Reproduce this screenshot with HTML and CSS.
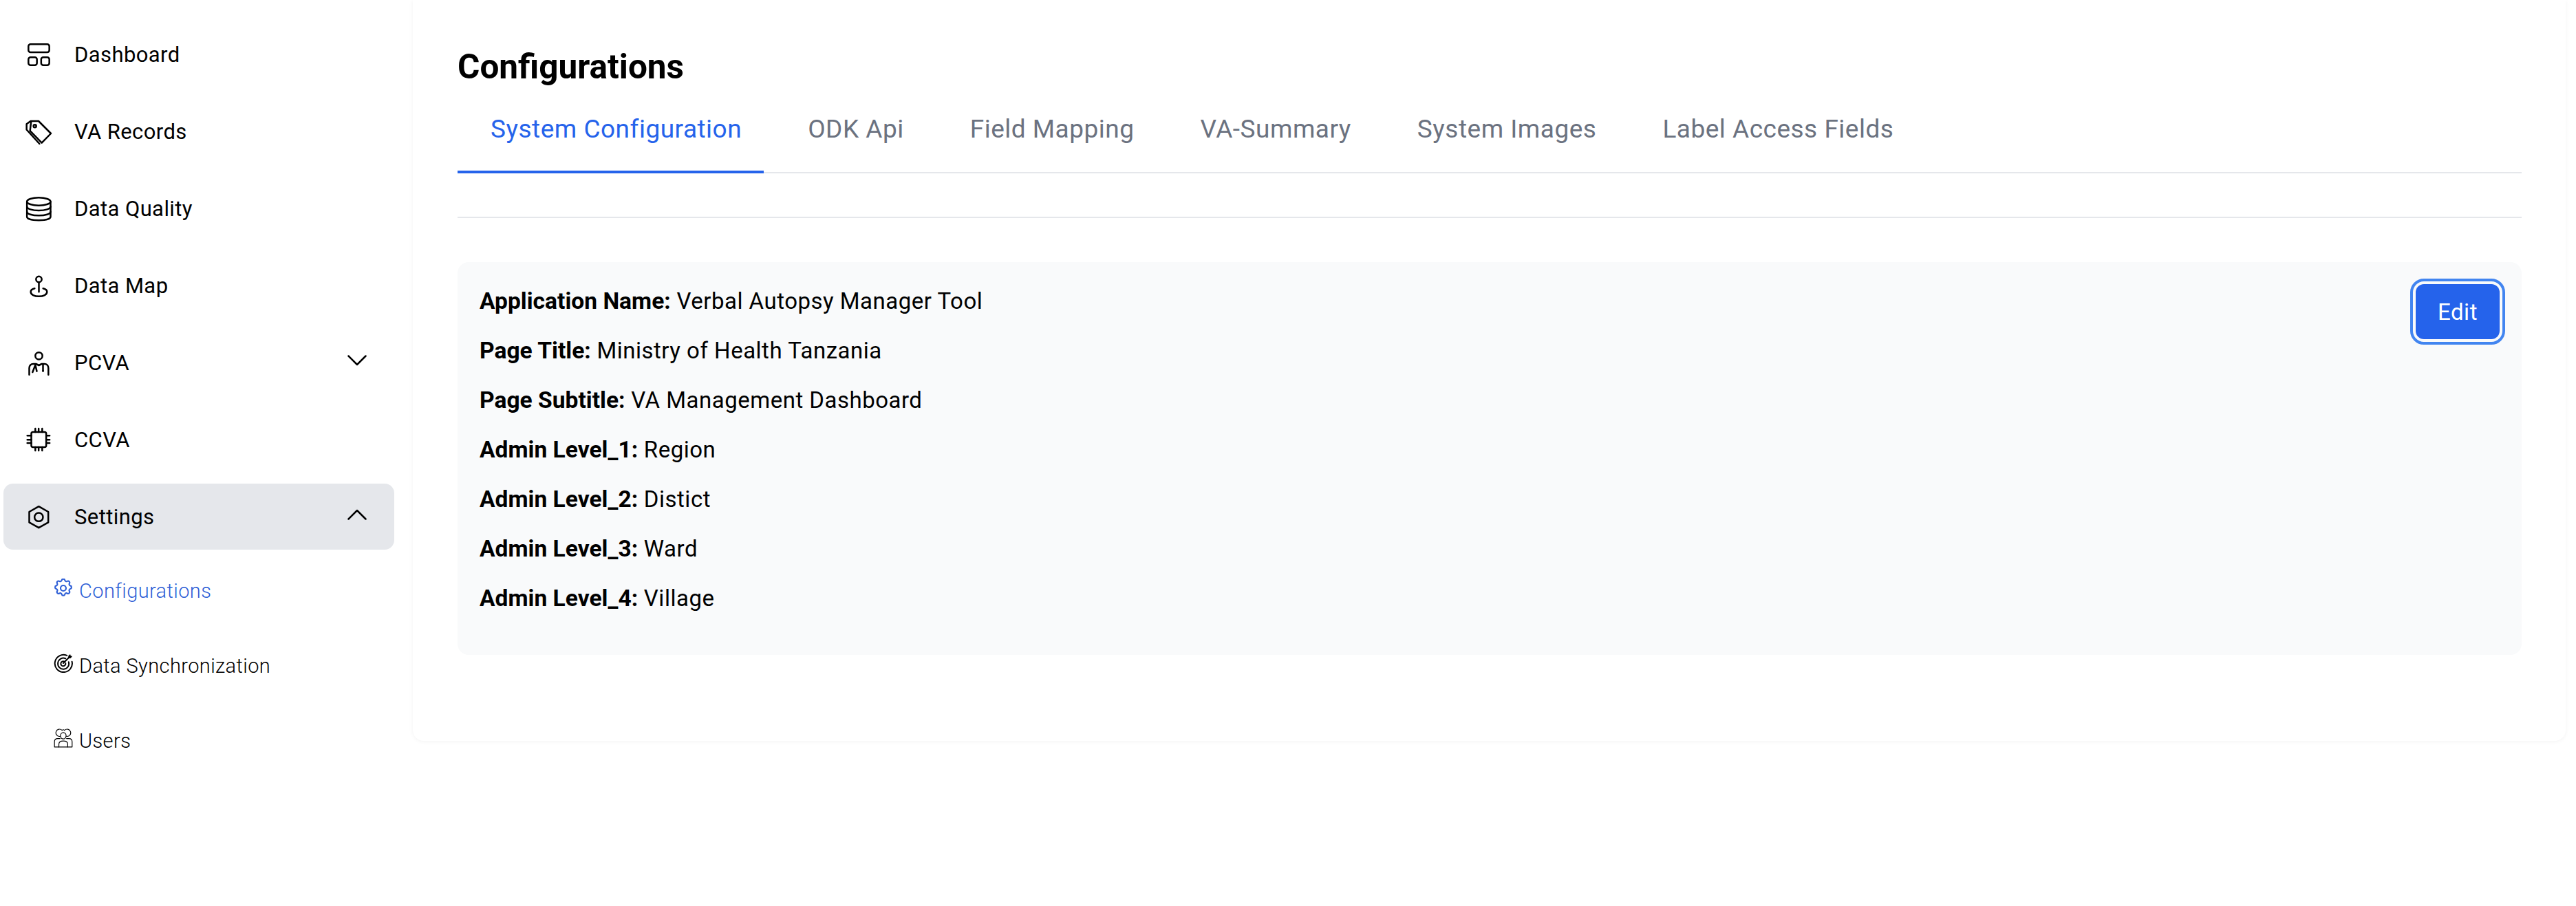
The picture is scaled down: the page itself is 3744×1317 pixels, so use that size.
FILE: index.html
```html
<!DOCTYPE html>
<html lang="en">
<head>
  <meta charset="UTF-8">
  <title>Configurations</title>
  <link rel="stylesheet" href="styles.css">
</head>
<body>

  <aside class="sidebar">
    <nav class="nav">
      <a class="nav-item">
        <svg class="nav-icon" viewBox="0 0 24 24"><rect x="2.600" y="3.200" width="18.200" height="7" rx="1.800"/><rect x="2.600" y="14.600" width="7.400" height="6.800" rx="1.800"/><rect x="13.700" y="14.600" width="7.100" height="6.800" rx="1.800"/></svg>
        <span>Dashboard</span>
      </a>
      <a class="nav-item">
        <svg class="nav-icon" viewBox="0 0 24 24"><path d="M5 3h6.400l10.800 10.800-8 8.200L4 11.500z"/><circle cx="8.200" cy="7.400" r="1.200"/><path d="M4.500 3L1 5.500v5l11.200 12.300"/></svg>
        <span>VA Records</span>
      </a>
      <a class="nav-item">
        <svg class="nav-icon" viewBox="0 0 24 24"><ellipse cx="11.600" cy="6" rx="10.300" ry="3.400"/><path d="M1.300 6v13.200c0 2 4.600 3.100 10.300 3.100s10.300-1.100 10.300-3.100V6"/><path d="M1.300 10.400c0 2 4.600 3.400 10.300 3.400s10.300-1.400 10.300-3.400"/><path d="M1.300 14.800c0 2 4.600 3.400 10.300 3.400s10.300-1.400 10.300-3.400"/></svg>
        <span>Data Quality</span>
      </a>
      <a class="nav-item">
        <svg class="nav-icon" viewBox="0 0 24 24"><circle cx="11.700" cy="6.600" r="2.500"/><path d="M11.700 9.100v8.400"/><path d="M8 14.500c-2.200.5-3.400 1.500-3.400 3 0 2.500 3.200 4 7.100 4s7.100-1.500 7.100-4c0-1.500-1.200-2.500-3.400-3"/></svg>
        <span>Data Map</span>
      </a>
      <a class="nav-item">
        <svg class="nav-icon" viewBox="0 0 24 24"><circle cx="11.700" cy="6.200" r="3.100"/><path d="M3.300 22.600v-5.800c0-2.200 1.500-3.600 3.500-3.600h2.400l2.500 1.200 2.500-1.200h2.300c2 0 3.500 1.400 3.500 3.600v5.800"/><path d="M6.200 20.400l2.400-6.200 1.300 5.400"/><path d="M15.300 13.800v5.200"/><circle class="filled" cx="15.300" cy="19.400" r="0.900"/></svg>
        <span>PCVA</span>
        <svg class="chevron" viewBox="0 0 28 16"><path d="M1.500 1.500L14 14 26.500 1.500"/></svg>
      </a>
      <a class="nav-item">
        <svg class="nav-icon" viewBox="0 0 24 24"><rect x="5.100" y="5.400" width="13" height="13.200" rx="1.500"/><path d="M8.600 5.400V2.400M11.500 5.400V2.400M14.600 5.400V2.400M8.600 21.600v-3M11.500 21.600v-3M14.600 21.600v-3M1.600 8.600h3.500M1.600 12.200h3.500M1.600 15h3.500M18.100 8.600h3M18.100 12.200h3M18.100 15h3"/></svg>
        <span>CCVA</span>
      </a>
      <a class="nav-item is-open">
        <svg class="nav-icon" viewBox="0 0 24 24"><path d="M11.600 3.100l8.300 4.700v9.200l-8.300 4.700-8.300-4.700V7.800z"/><circle cx="11.600" cy="12.400" r="3.700"/></svg>
        <span>Settings</span>
        <svg class="chevron" viewBox="0 0 28 16"><path d="M1.500 14.500L14 2 26.500 14.500"/></svg>
      </a>
    </nav>

    <div class="subnav">
      <a class="subnav-item is-active">
        <svg class="sub-icon" viewBox="1.500 1.500 21 21"><path d="M10.300 3.300c.4-1.700 3-1.700 3.400 0a1.700 1.700 0 0 0 2.600 1.100c1.500-.9 3.300.8 2.400 2.400a1.700 1.700 0 0 0 1 2.500c1.700.4 1.700 3 0 3.400a1.700 1.700 0 0 0-1 2.600c.9 1.500-.9 3.300-2.400 2.400a1.700 1.700 0 0 0-2.600 1c-.4 1.700-3 1.700-3.400 0a1.700 1.700 0 0 0-2.600-1c-1.500.9-3.300-.9-2.400-2.400a1.700 1.700 0 0 0-1-2.600c-1.700-.4-1.700-3 0-3.400a1.700 1.700 0 0 0 1-2.500c-.9-1.600.9-3.300 2.400-2.400a1.700 1.700 0 0 0 2.600-1.100z"/><circle cx="12" cy="12" r="3"/></svg>
        <span>Configurations</span>
      </a>
      <a class="subnav-item">
        <svg class="sub-icon target" viewBox="0 0 24 24"><path d="M16.500 2.500A10.800 10.800 0 1 0 22.800 10"/><path d="M14.800 6.200A6.900 6.900 0 1 0 18.700 10.500"/><path d="M13.200 10A3 3 0 1 0 14.800 12"/><path d="M12 12l6.800-6.800"/><path class="filled" d="M18 6l.3-3.300L20.600.8l.6 2 2 .6-2 2.300z"/></svg>
        <span>Data Synchronization</span>
      </a>
      <a class="subnav-item">
        <svg class="sub-icon thin" viewBox="0 0 24 24"><path d="M8 9.800a4.500 4.500 0 1 1 2.500-7.600 2.200 2.200 0 0 1 3 0 4.500 4.500 0 1 1 2.500 7.600"/><path d="M8.500 9a3.500 4 0 1 0 7 0 3.500 4 0 1 0-7 0z"/><path d="M6.500 23v-3.500c0-2.500 2-4 5.500-4s5.500 1.500 5.500 4V23"/><path d="M8 12.500H5c-2.500 0-4 1.500-4 4V23h22v-6.500c0-2.500-1.500-4-4-4h-3"/></svg>
        <span>Users</span>
      </a>
    </div>
  </aside>

  <main class="content">
    <h1 class="title">Configurations</h1>

    <div class="tabs">
      <a class="tab is-active">System Configuration</a>
      <a class="tab">ODK Api</a>
      <a class="tab">Field Mapping</a>
      <a class="tab">VA-Summary</a>
      <a class="tab">System Images</a>
      <a class="tab">Label Access Fields</a>
    </div>

    <hr class="divider">

    <section class="panel">
      <div class="info">
        <p><strong>Application Name:</strong> Verbal Autopsy Manager Tool</p>
        <p><strong>Page Title:</strong> Ministry of Health Tanzania</p>
        <p><strong>Page Subtitle:</strong> VA Management Dashboard</p>
        <p><strong>Admin Level_1:</strong> Region</p>
        <p><strong>Admin Level_2:</strong> Distict</p>
        <p><strong>Admin Level_3:</strong> Ward</p>
        <p><strong>Admin Level_4:</strong> Village</p>
      </div>
      <button class="btn-edit" type="button">Edit</button>
    </section>
  </main>

</body>
</html>
```

FILE: styles.css
```css
* {
  box-sizing: border-box;
}

body {
  margin: 0;
  height: 1317px;
  display: flex;
  align-items: flex-start;
  background: #fff;
  color: #000;
  font-family: Roboto, "Liberation Sans", sans-serif;
  overflow: hidden;
}

a {
  color: inherit;
  text-decoration: none;
}

.sidebar {
  width: 600px;
  flex-shrink: 0;
  padding: 31px 27px 0 5px;
}

.nav {
  display: flex;
  flex-direction: column;
  gap: 16px;
}

.nav-item {
  display: flex;
  align-items: center;
  gap: 31px;
  height: 96px;
  padding: 0 40px 0 32px;
  border-radius: 14px;
  font-size: 31px;
  letter-spacing: 0.4px;
}

.nav-item.is-open {
  background: #e5e7eb;
}

.nav-icon {
  width: 40px;
  height: 40px;
  flex-shrink: 0;
  fill: none;
  stroke: #000;
  stroke-width: 1.5;
  stroke-linecap: round;
  stroke-linejoin: round;
}

.filled {
  fill: currentColor;
  stroke: none;
}

.chevron {
  width: 28px;
  height: 16px;
  margin-left: auto;
  margin-top: -7px;
  fill: none;
  stroke: #000;
  stroke-width: 2.5;
  stroke-linecap: round;
  stroke-linejoin: round;
}

.subnav {
  display: flex;
  flex-direction: column;
  gap: 53px;
  padding: 32px 0 0 73px;
}

.subnav-item {
  display: flex;
  align-items: center;
  gap: 9px;
  height: 56px;
  font-size: 29px;
  font-weight: 300;
  letter-spacing: 0.4px;
}

.subnav-item.is-active {
  color: #2f5fd6;
}

.sub-icon {
  width: 28px;
  height: 28px;
  margin-top: -8px;
  flex-shrink: 0;
  fill: none;
  stroke: currentColor;
  stroke-width: 1.6;
  stroke-linecap: round;
  stroke-linejoin: round;
}

.sub-icon.target {
  stroke-width: 1.7;
}

.sub-icon.thin {
  stroke-width: 1;
}

.content {
  width: 3129px;
  height: 1077px;
  padding: 64px 64px 0 65px;
  border-radius: 0 0 16px 16px;
  box-shadow: 0 1px 6px rgba(0, 0, 0, 0.05);
}

.title {
  margin: 0;
  font-size: 49.5px;
  line-height: 66px;
  font-weight: 700;
}

.tabs {
  display: flex;
  height: 122px;
  border-bottom: 2px solid #e5e7eb;
}

.tab {
  height: 122px;
  margin-right: 16px;
  padding: 0 32px 0 48px;
  line-height: 116px;
  font-size: 37px;
  letter-spacing: 0.5px;
  color: #6b7280;
}

.tab.is-active {
  color: #2563eb;
  border-bottom: 4px solid #2563eb;
}

.divider {
  height: 2px;
  margin: 63px 0 64px;
  border: 0;
  background: #e5e7eb;
}

.panel {
  display: flex;
  justify-content: space-between;
  align-items: flex-start;
  height: 571px;
  padding: 33px 32px 32px;
  border-radius: 16px;
  background: #f9fafb;
}

.info {
  font-size: 33px;
  letter-spacing: 0.5px;
}

.info p {
  margin: 0 0 24px;
  line-height: 48px;
}

.info strong {
  font-size: 33.6px;
  font-weight: 700;
  letter-spacing: 0;
}

.btn-edit {
  width: 122px;
  height: 80px;
  margin-top: -1px;
  border: 0;
  border-radius: 12px;
  background: #2563eb;
  color: #fff;
  font-family: inherit;
  font-size: 33px;
  letter-spacing: 0.5px;
  outline: 4px solid #4285f0;
  outline-offset: 4px;
}
```
